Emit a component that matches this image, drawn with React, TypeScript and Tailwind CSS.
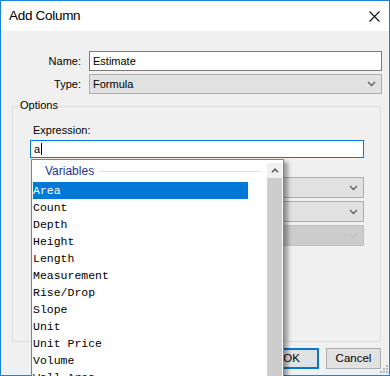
import React from "react";

const sans = { fontFamily: '"Liberation Sans", Arial, sans-serif' } as const;
const mono = { fontFamily: '"Liberation Mono", "Courier New", monospace' } as const;

function Chevron({ color = "#606060" }: { color?: string }) {
  return (
    <svg width="9" height="6" viewBox="0 0 9 6" className="shrink-0">
      <path d="M1 1 L4.5 4.5 L8 1" fill="none" stroke={color} strokeWidth="1.3" />
    </svg>
  );
}

function Select({ text, disabled }: { text?: string; disabled?: boolean }) {
  return (
    <div
      className={
        "h-[21px] flex items-center justify-between pl-[3px] pr-[5px] border " +
        (disabled ? "bg-[#cccccc] border-[#bfbfbf]" : "bg-[#e1e1e1] border-[#adadad]")
      }
    >
      <span className="text-[11px] text-black">{text ?? ""}</span>
      <Chevron color={disabled ? "#bfbfbf" : "#606060"} />
    </div>
  );
}

const items = [
  "Area",
  "Count",
  "Depth",
  "Height",
  "Length",
  "Measurement",
  "Rise/Drop",
  "Slope",
  "Unit",
  "Unit Price",
  "Volume",
  "Wall Area",
];

export default function App() {
  return (
    <div className="relative w-[390px] h-[376px] overflow-hidden" style={sans}>
      <div className="w-[390px] h-[376px] border border-[#1883d7] bg-[#f0f0f0] flex flex-col">
        {/* Title bar */}
        <div className="h-[30px] bg-white flex items-center justify-between pl-[8px] pr-[9px] shrink-0">
          <span className="text-[13.5px] text-black tracking-[-0.3px]">Add Column</span>
          <svg width="11" height="11" viewBox="0 0 11 11">
            <path d="M0.5 0.5 L10.5 10.5 M10.5 0.5 L0.5 10.5" stroke="#111" strokeWidth="1.1" />
          </svg>
        </div>

        {/* Body */}
        <div className="flex-1 flex flex-col pt-[20px] text-[11px] text-black">
          <div className="flex items-center h-[20px]">
            <span className="w-[80px] text-right">Name:</span>
            <div className="ml-[8px] w-[293px] h-[20px] bg-white border border-[#7a7a7a] flex items-center pl-[3px]">
              Estimate
            </div>
          </div>
          <div className="flex items-center h-[20px] mt-[3px]">
            <span className="w-[80px] text-right">Type:</span>
            <div className="ml-[8px] w-[293px] h-[20px] bg-[#e1e1e1] border border-[#adadad] flex items-center justify-between pl-[3px] pr-[5px]">
              <span>Formula</span>
              <Chevron />
            </div>
          </div>

          {/* Options group */}
          <div className="relative mt-[12px] ml-[11px] w-[369px] h-[236px] border border-[#dcdcdc] pl-[17px] pt-[17px]">
            <span className="absolute -top-[8px] left-[6px] bg-[#f0f0f0] px-[1px] leading-[13px]">Options</span>
            <div className="pl-[3px] leading-[13px]">Expression:</div>
            <div className="mt-[3px] w-[334px] h-[18px] bg-white border border-[#0078d7] flex items-center pl-[3px]">
              <span>a</span>
              <span className="w-[1px] h-[12px] bg-black ml-[1px]" />
            </div>
            <div className="mt-[19px] ml-[100px] w-[234px] flex flex-col gap-[3px]">
              <Select />
              <Select />
              <Select disabled />
            </div>
          </div>

          {/* Buttons */}
          <div className="flex justify-end gap-[7px] mt-[6px] mr-[8px]">
            <button className="w-[55px] h-[21px] bg-[#e1e1e1] border-2 border-[#0078d7] text-[11.5px] text-black flex items-center justify-center">
              OK
            </button>
            <button className="w-[55px] h-[21px] bg-[#e1e1e1] border border-[#adadad] text-[11.5px] text-black flex items-center justify-center">
              Cancel
            </button>
          </div>
        </div>
      </div>

      {/* Size grip */}
      <svg className="absolute right-[2px] bottom-[3px]" width="8" height="8" viewBox="0 0 8 8">
        <rect x="6" y="0" width="2" height="2" fill="#b8b8b8" />
        <rect x="3" y="3" width="2" height="2" fill="#b8b8b8" />
        <rect x="6" y="3" width="2" height="2" fill="#b8b8b8" />
        <rect x="0" y="6" width="2" height="2" fill="#b8b8b8" />
        <rect x="3" y="6" width="2" height="2" fill="#b8b8b8" />
        <rect x="6" y="6" width="2" height="2" fill="#b8b8b8" />
      </svg>

      {/* Autocomplete dropdown */}
      <div className="absolute left-[31px] top-[159px] w-[253px] h-[240px] bg-white border border-[#828282] shadow-[4px_3px_4px_rgba(0,0,0,0.35)] flex">
        <div className="flex-1 flex flex-col pl-[1px]">
          <div className="h-[22px] flex items-center shrink-0">
            <span className="ml-[12px] text-[12px] text-[#1e3391]">Variables</span>
            <span className="ml-[6px] w-[160px] h-[1px] bg-[#d5dbe9]" />
          </div>
          {items.map((it, i) => (
            <div
              key={it}
              className={
                "h-[17px] w-[215px] flex items-center text-[11.5px] whitespace-pre shrink-0 " +
                (i === 0 ? "bg-[#0078d7] text-white" : "text-black")
              }
              style={mono}
            >
              {it}
            </div>
          ))}
        </div>
        <div className="w-[15px] mr-[1px] mt-[3px] flex flex-col">
          <div className="h-[15px] bg-[#f0f0f0] flex items-center justify-center">
            <svg width="8" height="5" viewBox="0 0 8 5">
              <path d="M1 4.2 L4 1.2 L7 4.2" fill="none" stroke="#606060" strokeWidth="1.6" />
            </svg>
          </div>
          <div className="flex-1 bg-[#cdcdcd]" />
        </div>
      </div>
    </div>
  );
}
